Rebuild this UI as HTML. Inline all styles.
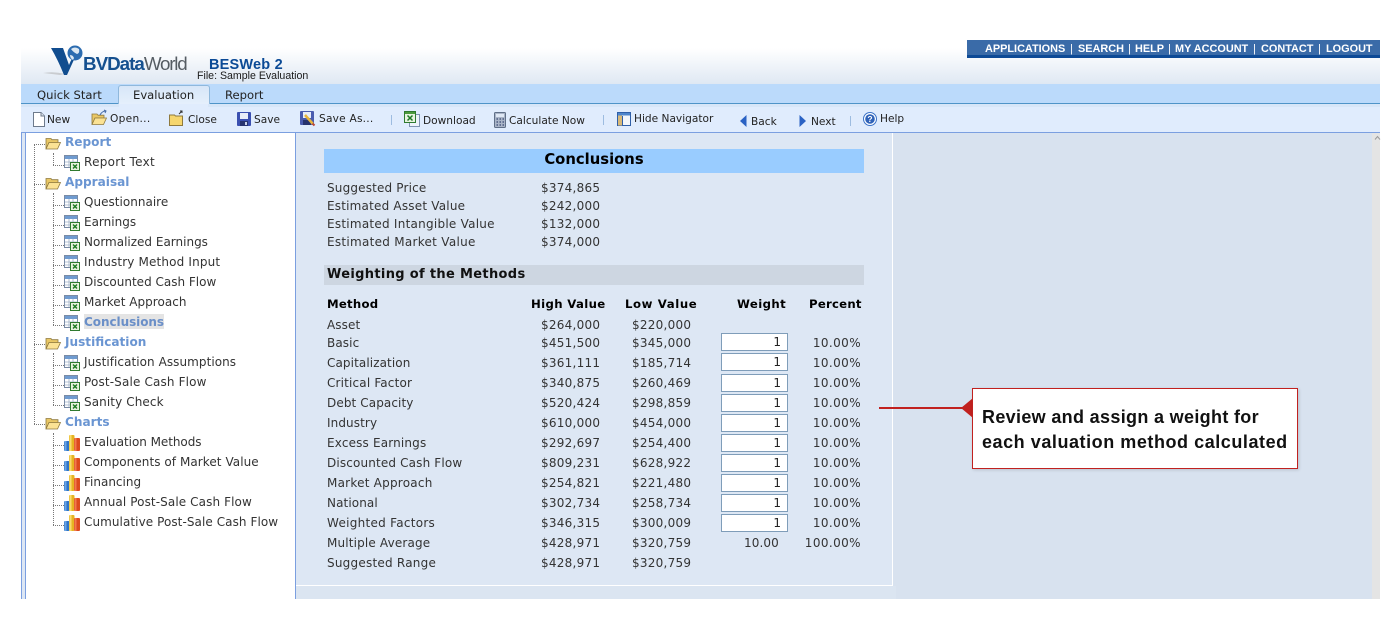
<!DOCTYPE html>
<html><head><meta charset="utf-8"><title>BESWeb 2</title>
<style>
html,body{margin:0;padding:0;background:#fff;width:1400px;height:639px;overflow:hidden}
body{position:relative;font-family:"DejaVu Sans",sans-serif;font-size:12px;color:#2b2b2b}
.b{position:absolute}
.t{position:absolute;white-space:nowrap;line-height:16px;height:16px}
.r{text-align:right}
.tb{font-size:10.6px;color:#222}
.tr{font-size:11.6px;color:#222}
.f{font-size:12.1px;font-weight:bold;color:#6a95d2}
.h{font-weight:bold;color:#000;font-size:11.7px;letter-spacing:.25px}
.n{font-size:12px;color:#333;letter-spacing:.1px}
.v{font-size:12px;color:#333;letter-spacing:.25px}
.p{font-size:12px;color:#333;letter-spacing:.4px;left:791px;width:70px;text-align:right}
.nv{position:absolute;white-space:nowrap;top:41px;color:#fff;font:bold 10.9px/16px 'Liberation Sans',sans-serif}
.ns{position:absolute;white-space:nowrap;top:41px;color:#fff;font:11px/16px 'Liberation Sans',sans-serif}
.i{position:absolute;left:721px;width:65px;height:16px;background:#fff;border:1px solid #7f9db9;text-align:right;font-size:12px;line-height:16px;color:#222}
.i span{padding-right:6px}
svg{position:absolute;overflow:visible}
.dv{position:absolute;width:0;border-left:1px dotted #777}
.dh{position:absolute;height:0;border-top:1px dotted #777}
</style></head><body>
<svg width="0" height="0" style="position:absolute"><defs>
<symbol id="folder" viewBox="0 0 16 14"><path d="M1 13V2.500h5l1 1.200h6v3H4z" fill="#e9c765" stroke="#8f7a3e" stroke-width=".8"/><path d="M1 13L4 6.500h11.500L12.500 13z" fill="#fbe294" stroke="#8f7a3e" stroke-width=".8"/></symbol>
<symbol id="sheet" viewBox="0 0 16 16"><rect x=".5" y=".5" width="13" height="12" fill="#fff" stroke="#7a8ba5"/><rect x="1" y="1" width="12" height="3" fill="#6f9bd0"/><path d="M1 7h12M1 10h12M5 4v8M9 4v8" stroke="#9fb0c6" stroke-width=".8"/><rect x="6.500" y="7.500" width="9" height="8" fill="#e8f2e0" stroke="#2f7a2f"/><path d="M9 9.500l4 4M13 9.500l-4 4" stroke="#1f7a24" stroke-width="1.500"/></symbol>
<symbol id="chart" viewBox="0 0 16 16"><rect x="0" y="6" width="5.500" height="10" rx="1" fill="#2f74c8"/><rect x="0.500" y="6" width="2" height="10" fill="#6ba5e4"/><rect x="5" y="0" width="5.500" height="16" rx="1" fill="#e6b422"/><rect x="5.500" y="0" width="2" height="16" fill="#f8dc70"/><rect x="10" y="3" width="6" height="13" rx="1" fill="#dd4a1e"/><rect x="10.500" y="3" width="2" height="13" fill="#f07a50"/></symbol>
</defs></svg>

<div class="b" style="left:21px;top:40px;width:1359px;height:44px;background:linear-gradient(#fff 0,#fff 8px,#dfe8f3 100%)"></div>
<div class="b" style="left:967px;top:40px;width:413px;height:15px;background:#3a6ba8;border-bottom:3px solid #0d4a96"></div>
<div class="nv" style="left:985px">APPLICATIONS</div><div class="ns" style="left:1070px">|</div>
<div class="nv" style="left:1078px">SEARCH</div><div class="ns" style="left:1128px">|</div>
<div class="nv" style="left:1135px">HELP</div><div class="ns" style="left:1168px">|</div>
<div class="nv" style="left:1175px">MY ACCOUNT</div><div class="ns" style="left:1253px">|</div>
<div class="nv" style="left:1261px">CONTACT</div><div class="ns" style="left:1318px">|</div>
<div class="nv" style="left:1326px">LOGOUT</div>

<svg style="left:40px;top:40px" width="60" height="40" viewBox="0 0 60 40"><path d="M3 33Q14 31 25 34L20 35Q12 34 3 33z" fill="#c9ccd0"/><path d="M11 8H23L29 25Q32 17 37 13L27 35H24Q18 20 11 8z" fill="#114d8f"/><circle cx="35" cy="13" r="7.500" fill="#2c6cb0"/><path d="M31 9q4-3 8 0q1 4-2 5q-4-2-6-5zM30 15q3 0 4 3l-1 2q-3-2-3-5z" fill="#dce8f2"/></svg>
<div class="t" style="left:83px;top:54px;height:20px;line-height:20px;font-family:'Liberation Sans',sans-serif;font-size:18.800px;letter-spacing:-1px;color:#15508f"><b>BVData</b><span style="color:#555c63;letter-spacing:-1.200px">World</span></div>
<div class="t" style="left:209px;top:57px;font:bold 14.500px/16px 'Liberation Sans',sans-serif;color:#0b4a96;letter-spacing:.2px">BESWeb 2</div>
<div class="t" style="left:197px;top:68px;font:10.600px/16px 'Liberation Sans',sans-serif;color:#1a1a1a">File: Sample Evaluation</div>

<div class="b" style="left:21px;top:84px;width:1359px;height:19px;background:#bbdafb"></div>
<div class="b" style="left:21px;top:103px;width:1359px;height:1px;background:#4f94c8"></div>
<div class="b" style="left:118px;top:85px;width:90px;height:19px;background:linear-gradient(#d7e6f8,#e6f0fc);border:1px solid #8fb8dc;border-bottom:0;border-radius:3px 3px 0 0"></div>
<div class="t tr" style="left:37px;top:87px">Quick Start</div>
<div class="t tr" style="left:133px;top:87px">Evaluation</div>
<div class="t tr" style="left:225px;top:87px">Report</div>

<div class="b" style="left:21px;top:104px;width:1359px;height:3px;background:#d7e6f8"></div>
<div class="b" style="left:21px;top:107px;width:1359px;height:25px;background:#e0ecfd"></div>
<div class="b" style="left:119px;top:104px;width:89px;height:3px;background:#e0ecfd"></div>
<div class="b" style="left:21px;top:132px;width:1359px;height:1px;background:#7b9fe0"></div>

<svg style="left:33px;top:112px" width="12" height="15" viewBox="0 0 12 15"><path d="M.5.500H8L11.500 4V14.500H.5z" fill="#fff" stroke="#6d7a8c"/><path d="M8 .5V4h3.500" fill="#dfe6ee" stroke="#6d7a8c"/></svg>
<div class="t tb" style="left:47px;top:112px">New</div>
<svg style="left:91px;top:111px" width="16" height="15"><use href="#folder"/></svg><svg style="left:100px;top:110px" width="8" height="6"><path d="M0 5Q2 1 6 1M4 0l2 1-1 2" fill="none" stroke="#4a6ea8"/></svg>
<div class="t tb" style="left:110px;top:111px;letter-spacing:.3px">Open...</div>
<svg style="left:169px;top:112px" width="15" height="14" viewBox="0 0 15 14"><path d="M.5 13.500V3h5l1 1h7v9.500z" fill="#f6d66e" stroke="#8f7a3e"/></svg><svg style="left:178px;top:110px" width="6" height="5"><path d="M1 4l3-3M2 1h2v2" fill="none" stroke="#333"/></svg>
<div class="t tb" style="left:188px;top:112px">Close</div>
<svg style="left:237px;top:112px" width="14" height="14" viewBox="0 0 14 14"><rect width="14" height="14" rx="1" fill="#3a4fb0"/><rect x="3" y="1" width="8" height="6" fill="#e8edf8"/><rect x="3" y="9" width="8" height="5" fill="#27336e"/><rect x="8" y="10" width="2" height="3" fill="#c9d2e8"/></svg>
<div class="t tb" style="left:254px;top:112px">Save</div>
<svg style="left:300px;top:111px" width="15" height="15" viewBox="0 0 15 15"><rect width="14" height="14" rx="1" fill="#4a5cb0"/><rect x="3" y="1" width="8" height="6" fill="#e8edf8"/><rect x="3" y="9" width="8" height="5" fill="#27336e"/><path d="M5 4l8 9" stroke="#e8b43a" stroke-width="2.500"/><path d="M12.500 12.500l2 2" stroke="#b84a3a" stroke-width="2"/></svg>
<div class="t tb" style="left:319px;top:111px;letter-spacing:.22px">Save As...</div>
<div class="b" style="left:391px;top:115px;width:1px;height:10px;background:#9dbce0"></div>
<svg style="left:404px;top:111px" width="16" height="16" viewBox="0 0 16 16"><path d="M5.500 3.500H15.500V15.500H5.500z" fill="#eef3fa" stroke="#7f93b0"/><rect x=".5" y=".5" width="11" height="11" fill="#e8f3df" stroke="#2f7a2f"/><rect x="1" y="1" width="10" height="2" fill="#4c9a3c"/><path d="M3.500 4.500l5 5M8.500 4.500l-5 5" stroke="#1f7a24" stroke-width="1.500"/></svg>
<div class="t tb" style="left:423px;top:113px">Download</div>
<svg style="left:494px;top:112px" width="12" height="16" viewBox="0 0 12 16"><rect x=".5" y=".5" width="11" height="15" rx="1" fill="#aab5c8" stroke="#5f6f88"/><rect x="2" y="2" width="8" height="3" fill="#dfe8f5"/><path d="M2.500 7h1.500M5.500 7H7M8.500 7H10M2.500 10h1.500M5.500 10H7M8.500 10H10M2.500 13h1.500M5.500 13H7M8.500 13H10" stroke="#4a5a80" stroke-width="1.500"/></svg>
<div class="t tb" style="left:509px;top:113px">Calculate Now</div>
<div class="b" style="left:603px;top:115px;width:1px;height:10px;background:#9dbce0"></div>
<svg style="left:617px;top:112px" width="14" height="14" viewBox="0 0 14 14"><rect x=".5" y=".5" width="13" height="13" fill="#f3f6fa" stroke="#2f5fa8"/><rect x="1" y="1" width="12" height="2.500" fill="#4f86cc"/><rect x="1" y="3.500" width="4" height="10" fill="#d8b978"/><path d="M5.500 4v9" stroke="#2f5fa8"/></svg>
<div class="t tb" style="left:634px;top:111px">Hide Navigator</div>
<svg style="left:740px;top:115px" width="7" height="12"><path d="M6.500 0V12L0 6z" fill="#2a62c4"/></svg>
<div class="t tb" style="left:751px;top:114px">Back</div>
<svg style="left:799px;top:115px" width="7" height="12"><path d="M.5 0V12L7 6z" fill="#2a62c4"/></svg>
<div class="t tb" style="left:811px;top:114px">Next</div>
<div class="b" style="left:850px;top:116px;width:1px;height:10px;background:#9dbce0"></div>
<svg style="left:863px;top:112px" width="14" height="14" viewBox="0 0 14 14"><circle cx="7" cy="7" r="6.500" fill="#fff" stroke="#3a72c8"/><circle cx="7" cy="7" r="4.800" fill="#2f62b8"/><text x="7" y="10" font-size="8.500" font-weight="bold" fill="#fff" text-anchor="middle" font-family="Liberation Sans">?</text></svg>
<div class="t tb" style="left:880px;top:111px">Help</div>

<div class="b" style="left:21px;top:133px;width:1359px;height:466px;background:#d8e2ef"></div>
<div class="b" style="left:21px;top:133px;width:1px;height:466px;background:#7b9fe0"></div>
<div class="b" style="left:22px;top:133px;width:3px;height:466px;background:#dde7f4"></div>
<div class="b" style="left:25px;top:133px;width:270px;height:466px;background:#fff;border-left:1px solid #7b9fe0;box-sizing:border-box"></div>
<div class="b" style="left:295px;top:133px;width:1px;height:466px;background:#7b9fe0"></div>
<div class="b" style="left:296px;top:133px;width:596px;height:452px;background:#dde7f4;border-right:1px solid #fff;border-bottom:1px solid #fff"></div>
<div class="b" style="left:296px;top:586px;width:600px;height:13px;background:#dbe5f1"></div>
<div class="b" style="left:1372px;top:133px;width:8px;height:466px;background:#e4e4e4"></div>
<svg style="left:1375px;top:136px" width="5" height="4"><path d="M0 3.500L2.500 .5L5 3.500" fill="none" stroke="#999"/></svg>

<div class="dv" style="left:34px;top:144px;height:280px"></div>
<div class="dh" style="left:34px;top:144px;width:11px"></div>
<div class="dh" style="left:34px;top:184px;width:11px"></div>
<div class="dh" style="left:34px;top:344px;width:11px"></div>
<div class="dh" style="left:34px;top:424px;width:11px"></div>
<div class="dv" style="left:53px;top:153px;height:12px"></div>
<div class="dv" style="left:53px;top:193px;height:132px"></div>
<div class="dv" style="left:53px;top:353px;height:52px"></div>
<div class="dv" style="left:53px;top:433px;height:92px"></div>
<div class="dh" style="left:53px;top:165px;width:11px"></div>
<div class="dh" style="left:53px;top:205px;width:11px"></div>
<div class="dh" style="left:53px;top:225px;width:11px"></div>
<div class="dh" style="left:53px;top:245px;width:11px"></div>
<div class="dh" style="left:53px;top:265px;width:11px"></div>
<div class="dh" style="left:53px;top:285px;width:11px"></div>
<div class="dh" style="left:53px;top:305px;width:11px"></div>
<div class="dh" style="left:53px;top:325px;width:11px"></div>
<div class="dh" style="left:53px;top:365px;width:11px"></div>
<div class="dh" style="left:53px;top:385px;width:11px"></div>
<div class="dh" style="left:53px;top:405px;width:11px"></div>
<div class="dh" style="left:53px;top:445px;width:11px"></div>
<div class="dh" style="left:53px;top:465px;width:11px"></div>
<div class="dh" style="left:53px;top:485px;width:11px"></div>
<div class="dh" style="left:53px;top:505px;width:11px"></div>
<div class="dh" style="left:53px;top:525px;width:11px"></div>

<svg style="left:45px;top:136px" width="16" height="14"><use href="#folder"/></svg><div class="t f" style="left:65px;top:134px">Report</div>
<svg style="left:45px;top:176px" width="16" height="14"><use href="#folder"/></svg><div class="t f" style="left:65px;top:174px">Appraisal</div>
<svg style="left:45px;top:336px" width="16" height="14"><use href="#folder"/></svg><div class="t f" style="left:65px;top:334px">Justification</div>
<svg style="left:45px;top:416px" width="16" height="14"><use href="#folder"/></svg><div class="t f" style="left:65px;top:414px">Charts</div>

<svg style="left:64px;top:155px" width="16" height="16"><use href="#sheet"/></svg><div class="t n" style="left:84px;top:154px;letter-spacing:.28px">Report Text</div>
<svg style="left:64px;top:195px" width="16" height="16"><use href="#sheet"/></svg><div class="t n" style="left:84px;top:194px;letter-spacing:.02px">Questionnaire</div>
<svg style="left:64px;top:215px" width="16" height="16"><use href="#sheet"/></svg><div class="t n" style="left:84px;top:214px;letter-spacing:0">Earnings</div>
<svg style="left:64px;top:235px" width="16" height="16"><use href="#sheet"/></svg><div class="t n" style="left:84px;top:234px;letter-spacing:0">Normalized Earnings</div>
<svg style="left:64px;top:255px" width="16" height="16"><use href="#sheet"/></svg><div class="t n" style="left:84px;top:254px;letter-spacing:.15px">Industry Method Input</div>
<svg style="left:64px;top:275px" width="16" height="16"><use href="#sheet"/></svg><div class="t n" style="left:84px;top:274px;letter-spacing:0">Discounted Cash Flow</div>
<svg style="left:64px;top:295px" width="16" height="16"><use href="#sheet"/></svg><div class="t n" style="left:84px;top:294px;letter-spacing:.03px">Market Approach</div>
<svg style="left:64px;top:315px" width="16" height="16"><use href="#sheet"/></svg><div class="b" style="left:84px;top:314px;width:80px;height:15px;background:#e4e4e4"></div><div class="t" style="left:84px;top:314px;font-weight:bold;font-size:12px;color:#6a8fc8;letter-spacing:-.05px">Conclusions</div>
<svg style="left:64px;top:355px" width="16" height="16"><use href="#sheet"/></svg><div class="t n" style="left:84px;top:354px;letter-spacing:.06px">Justification Assumptions</div>
<svg style="left:64px;top:375px" width="16" height="16"><use href="#sheet"/></svg><div class="t n" style="left:84px;top:374px;letter-spacing:.15px">Post-Sale Cash Flow</div>
<svg style="left:64px;top:395px" width="16" height="16"><use href="#sheet"/></svg><div class="t n" style="left:84px;top:394px">Sanity Check</div>
<svg style="left:64px;top:435px" width="16" height="16"><use href="#chart"/></svg><div class="t n" style="left:84px;top:434px;letter-spacing:-.05px">Evaluation Methods</div>
<svg style="left:64px;top:455px" width="16" height="16"><use href="#chart"/></svg><div class="t n" style="left:84px;top:454px;letter-spacing:.06px">Components of Market Value</div>
<svg style="left:64px;top:475px" width="16" height="16"><use href="#chart"/></svg><div class="t n" style="left:84px;top:474px;letter-spacing:0">Financing</div>
<svg style="left:64px;top:495px" width="16" height="16"><use href="#chart"/></svg><div class="t n" style="left:84px;top:494px">Annual Post-Sale Cash Flow</div>
<svg style="left:64px;top:515px" width="16" height="16"><use href="#chart"/></svg><div class="t n" style="left:84px;top:514px;letter-spacing:.07px">Cumulative Post-Sale Cash Flow</div>

<div class="b" style="left:324px;top:149px;width:540px;height:24px;background:#99ccff"></div>
<div class="t" style="left:324px;top:152px;width:540px;text-align:center;font-weight:bold;font-size:14.800px;color:#000">Conclusions</div>
<div class="t n" style="left:327px;top:180px;letter-spacing:.17px">Suggested Price</div><div class="t v" style="left:541px;top:180px">$374,865</div>
<div class="t n" style="left:327px;top:198px;letter-spacing:.2px">Estimated Asset Value</div><div class="t v" style="left:541px;top:198px">$242,000</div>
<div class="t n" style="left:327px;top:216px;letter-spacing:.25px">Estimated Intangible Value</div><div class="t v" style="left:541px;top:216px">$132,000</div>
<div class="t n" style="left:327px;top:234px;letter-spacing:.28px">Estimated Market Value</div><div class="t v" style="left:541px;top:234px">$374,000</div>
<div class="b" style="left:324px;top:265px;width:540px;height:20px;background:#cdd6e1"></div>
<div class="t" style="left:327px;top:267px;font-weight:bold;font-size:13px;letter-spacing:.33px;color:#111">Weighting of the Methods</div>

<div class="t h" style="left:327px;top:296px">Method</div>
<div class="t h" style="left:531px;top:296px;letter-spacing:.35px">High Value</div>
<div class="t h" style="left:625px;top:296px;letter-spacing:.6px">Low Value</div>
<div class="t h" style="left:737px;top:296px;letter-spacing:.4px">Weight</div>
<div class="t h" style="left:809px;top:296px">Percent</div>

<div class="t n" style="left:327px;top:317px">Asset</div><div class="t v" style="left:541px;top:317px">$264,000</div><div class="t v" style="left:632px;top:317px">$220,000</div>

<div class="t n" style="left:327px;top:335px">Basic</div><div class="t v" style="left:541px;top:335px">$451,500</div><div class="t v" style="left:632px;top:335px">$345,000</div><div class="i" style="top:333px"><span>1</span></div><div class="t p" style="top:335px">10.00%</div>
<div class="t n" style="left:327px;top:355px">Capitalization</div><div class="t v" style="left:541px;top:355px">$361,111</div><div class="t v" style="left:632px;top:355px">$185,714</div><div class="i" style="top:353px"><span>1</span></div><div class="t p" style="top:355px">10.00%</div>
<div class="t n" style="left:327px;top:375px;letter-spacing:.17px">Critical Factor</div><div class="t v" style="left:541px;top:375px">$340,875</div><div class="t v" style="left:632px;top:375px">$260,469</div><div class="i" style="top:374px"><span>1</span></div><div class="t p" style="top:375px">10.00%</div>
<div class="t n" style="left:327px;top:395px">Debt Capacity</div><div class="t v" style="left:541px;top:395px">$520,424</div><div class="t v" style="left:632px;top:395px">$298,859</div><div class="i" style="top:394px"><span>1</span></div><div class="t p" style="top:395px">10.00%</div>
<div class="t n" style="left:327px;top:415px">Industry</div><div class="t v" style="left:541px;top:415px">$610,000</div><div class="t v" style="left:632px;top:415px">$454,000</div><div class="i" style="top:414px"><span>1</span></div><div class="t p" style="top:415px">10.00%</div>
<div class="t n" style="left:327px;top:435px;letter-spacing:.17px">Excess Earnings</div><div class="t v" style="left:541px;top:435px">$292,697</div><div class="t v" style="left:632px;top:435px">$254,400</div><div class="i" style="top:434px"><span>1</span></div><div class="t p" style="top:435px">10.00%</div>
<div class="t n" style="left:327px;top:455px;letter-spacing:.15px">Discounted Cash Flow</div><div class="t v" style="left:541px;top:455px">$809,231</div><div class="t v" style="left:632px;top:455px">$628,922</div><div class="i" style="top:454px"><span>1</span></div><div class="t p" style="top:455px">10.00%</div>
<div class="t n" style="left:327px;top:475px;letter-spacing:.23px">Market Approach</div><div class="t v" style="left:541px;top:475px">$254,821</div><div class="t v" style="left:632px;top:475px">$221,480</div><div class="i" style="top:474px"><span>1</span></div><div class="t p" style="top:475px">10.00%</div>
<div class="t n" style="left:327px;top:495px">National</div><div class="t v" style="left:541px;top:495px">$302,734</div><div class="t v" style="left:632px;top:495px">$258,734</div><div class="i" style="top:494px"><span>1</span></div><div class="t p" style="top:495px">10.00%</div>
<div class="t n" style="left:327px;top:515px;letter-spacing:.28px">Weighted Factors</div><div class="t v" style="left:541px;top:515px">$346,315</div><div class="t v" style="left:632px;top:515px">$300,009</div><div class="i" style="top:514px"><span>1</span></div><div class="t p" style="top:515px">10.00%</div>
<div class="t n" style="left:327px;top:535px;letter-spacing:.16px">Multiple Average</div><div class="t v" style="left:541px;top:535px">$428,971</div><div class="t v" style="left:632px;top:535px">$320,759</div><div class="t n" style="left:744px;top:535px">10.00</div><div class="t p" style="top:535px">100.00%</div>
<div class="t n" style="left:327px;top:555px;letter-spacing:.23px">Suggested Range</div><div class="t v" style="left:541px;top:555px">$428,971</div><div class="t v" style="left:632px;top:555px">$320,759</div>

<div class="b" style="left:879px;top:407px;width:84px;height:2px;background:#c1211f"></div>
<svg style="left:961px;top:398px" width="12" height="20"><path d="M12 0V20L0 10z" fill="#c1211f"/></svg>
<div class="b" style="left:972px;top:388px;width:324px;height:79px;background:#fff;border:1px solid #c1211f;box-shadow:1px 1px 3px rgba(0,0,0,.15)"></div>
<div class="t" style="left:982px;top:405px;height:24px;line-height:24px;font-family:'Liberation Sans',sans-serif;font-weight:bold;font-size:18px;letter-spacing:.33px;color:#111">Review and assign a weight for</div>
<div class="t" style="left:982px;top:430px;height:24px;line-height:24px;font-family:'Liberation Sans',sans-serif;font-weight:bold;font-size:18px;letter-spacing:.55px;color:#111">each valuation method calculated</div>
</body></html>
